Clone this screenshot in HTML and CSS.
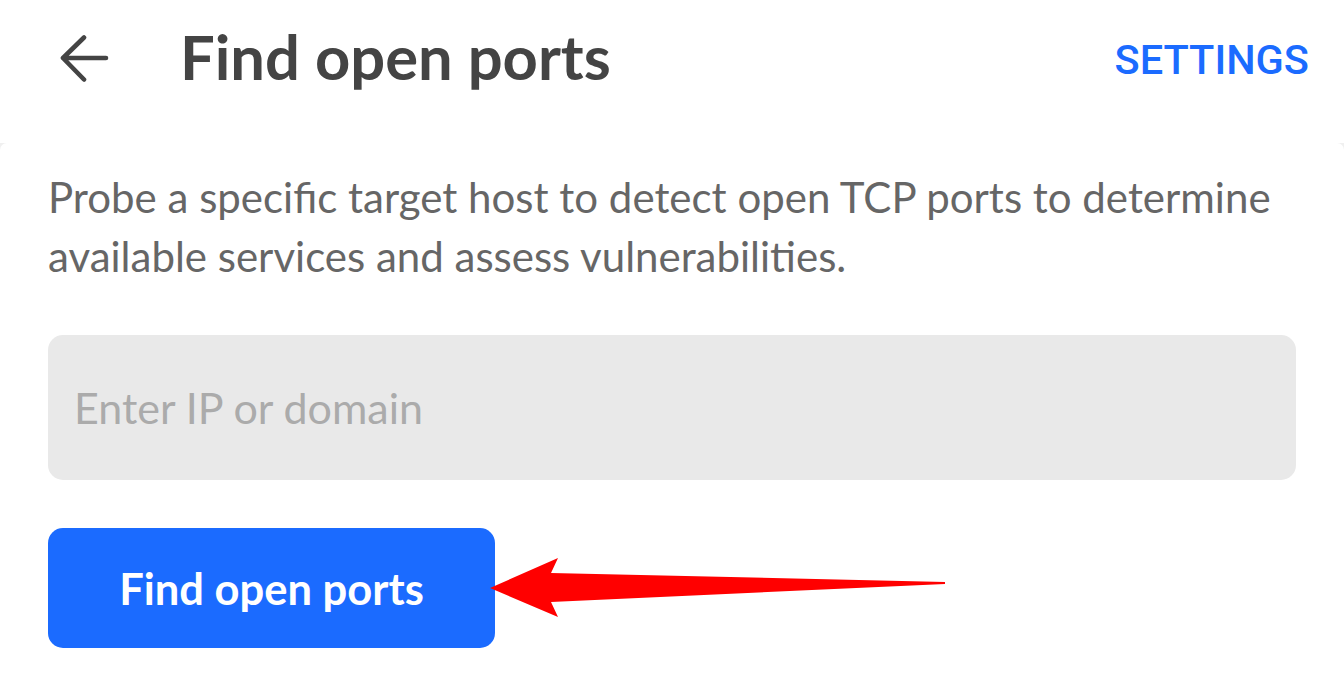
FILE: index.html
```html
<!DOCTYPE html>
<html lang="en">
<head>
<meta charset="utf-8">
<title>Find open ports</title>
<link rel="stylesheet" href="styles.css">
</head>
<body>
<div class="app">
  <header class="topbar">
    <button class="back" aria-label="Back">
      <svg width="52" height="48" viewBox="0 0 52 48" fill="none" stroke="#444" stroke-width="4.6" stroke-linecap="round" stroke-linejoin="round">
        <path d="M48 24H5M26 3.5L5 24L26 45.5"/>
      </svg>
    </button>
    <h1 class="title">Find open ports</h1>
    <a class="settings" href="#">SETTINGS</a>
  </header>
  <div class="sheet-wrap">
    <main class="sheet">
      <p class="desc">Probe a specific target host to detect open TCP ports to determine available services and assess vulnerabilities.</p>
      <div class="field"><input class="input" type="text" placeholder="Enter IP or domain"></div>
      <div class="actions">
        <button class="primary">Find open ports</button>
      </div>
    </main>
  </div>
</div>
<svg class="annotation" width="1344" height="680" viewBox="0 0 1344 680">
  <polygon fill="#ff0000" points="490,588 558,558 551,573 945,582 945,584 551,602 558,617"/>
</svg>
</body>
</html>
```
FILE: styles.css
```css
html, body {
  margin: 0;
  padding: 0;
  background: #ffffff;
}
body {
  font-family: Lato, "Noto Sans", sans-serif;
  width: 1344px;
  height: 680px;
  overflow: hidden;
  position: relative;
}
.app {
  display: flex;
  flex-direction: column;
  height: 680px;
}
.topbar {
  display: flex;
  align-items: center;
  height: 117px;
  padding: 0 36px 0 58px;
  background: #fff;
}
.back {
  display: flex;
  align-items: center;
  justify-content: center;
  padding: 0;
  margin: 0;
  border: 0;
  background: transparent;
  width: 52px;
  height: 48px;
  margin-top: -1px;
}
.title {
  margin: -3px 0 0 70px;
  font-family: Lato, sans-serif;
  font-weight: 700;
  font-size: 61.5px;
  line-height: 1;
  color: #444444;
}
.settings {
  margin-left: auto;
  font-family: Roboto, sans-serif;
  font-weight: 500;
  font-size: 41.5px;
  letter-spacing: 0;
  color: #1b6bff;
  text-decoration: none;
  margin-right: -1px;
  margin-top: 2px;
}
.sheet-wrap {
  margin-top: 26px;
  background: #f0f0f0;
  flex: 1;
  display: flex;
}
.sheet {
  flex: 1;
  background: #fff;
  border-radius: 7px 7px 0 0;
  padding: 25px 48px 0 48px;
}
.desc {
  margin: 0;
  font-size: 42px;
  line-height: 59px;
  color: #666666;
}
.field {
  margin-top: 49px;
}
.input {
  display: block;
  box-sizing: border-box;
  width: 100%;
  height: 145px;
  border: 0;
  outline: none;
  border-radius: 15px;
  background: #e9e9e9;
  padding: 0 26px;
  font-family: Lato, sans-serif;
  font-size: 43px;
  color: #444;
}
.input::placeholder {
  color: #ababab;
}
.actions {
  margin-top: 48px;
}
.primary {
  display: flex;
  align-items: center;
  justify-content: center;
  width: 447px;
  height: 120px;
  border: 0;
  border-radius: 15px;
  background: #1b6bff;
  color: #fff;
  font-family: Lato, sans-serif;
  font-weight: 700;
  font-size: 43.5px;
  padding: 0;
}
.annotation {
  position: absolute;
  left: 0;
  top: 0;
  pointer-events: none;
}
```
